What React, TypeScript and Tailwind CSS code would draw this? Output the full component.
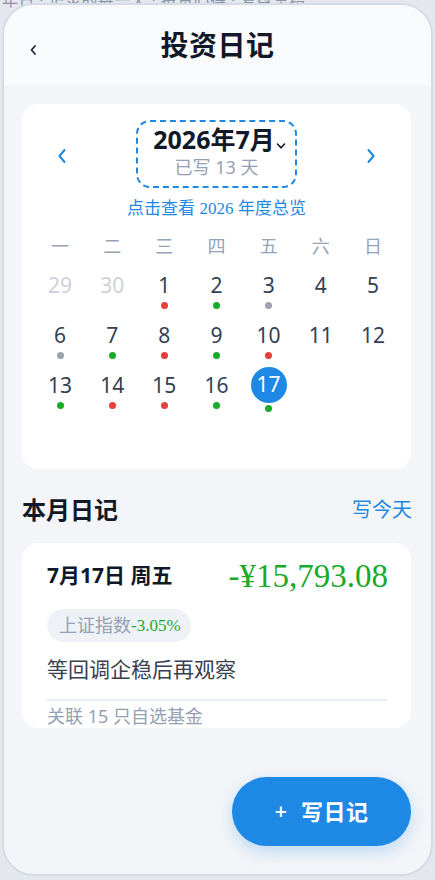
import React from "react";

const sans = { fontFamily: '"Noto Sans", "Noto Sans CJK SC", sans-serif' };
const serif = { fontFamily: '"Liberation Serif", "Noto Sans CJK SC", serif' };

type Day = { n: number; muted?: boolean; dot?: "r" | "g" | "s"; sel?: boolean } | null;

const rows: Day[][] = [
  [
    { n: 29, muted: true },
    { n: 30, muted: true },
    { n: 1, dot: "r" },
    { n: 2, dot: "g" },
    { n: 3, dot: "s" },
    { n: 4 },
    { n: 5 },
  ],
  [
    { n: 6, dot: "s" },
    { n: 7, dot: "g" },
    { n: 8, dot: "r" },
    { n: 9, dot: "g" },
    { n: 10, dot: "r" },
    { n: 11 },
    { n: 12 },
  ],
  [
    { n: 13, dot: "g" },
    { n: 14, dot: "r" },
    { n: 15, dot: "r" },
    { n: 16, dot: "g" },
    { n: 17, dot: "g", sel: true },
    null,
    null,
  ],
];

function Dot({ c, sel }: { c?: "r" | "g" | "s"; sel?: boolean }) {
  if (!c) return <div className="h-[6px] w-[6px] mt-[3px]" />;
  const cls =
    c === "r" ? "bg-[#e5403a]" : c === "g" ? "bg-[#1aaa2a]" : "bg-[#9ca3af]";
  return <div className={`h-[7px] w-[7px] rounded-full ${cls} ${sel ? "mt-[6px]" : "mt-[3px]"}`} />;
}

export default function App() {
  return (
    <div className="relative w-[435px] h-[880px] overflow-hidden bg-[#e4e8ee]" style={sans}>
      <div className="absolute left-[2px] top-[-12px] text-[16px] text-[#8a94a6] whitespace-nowrap tracking-wide">
        年日 · 记录的每一天 · 投资心得 · 复盘总结
      </div>
      <div className="relative mt-[3px] ml-[2px] w-[431px] h-[873px] rounded-[32px] border-2 border-[#d6dce6] bg-[#f3f5f8] overflow-hidden flex flex-col">
        {/* header */}
        <div className="relative h-[80px] bg-[#f9fafb] flex items-center justify-center shrink-0">
          <svg className="absolute left-[25px] top-[39px]" width="9" height="12" viewBox="0 0 9 12">
            <path d="M6 2 L2.5 6 L6 10" fill="none" stroke="#1f2937" strokeWidth="1.8" strokeLinecap="round" strokeLinejoin="round" />
          </svg>
          <div className="text-[28px] leading-[36px] font-bold text-[#111827] tracking-[0.5px] -mt-[1px]">投资日记</div>
        </div>

        <div className="pl-[18px] pr-[20px] pt-[19px] flex flex-col">
          {/* calendar card */}
          <div className="bg-white rounded-[16px] pt-[16px] pb-[59px] px-[12px]">
            <div className="relative flex justify-center">
              <svg className="absolute left-[23px] top-[28px]" width="10" height="16" viewBox="0 0 10 16">
                <path d="M7.5 2 L2.5 8 L7.5 14" fill="none" stroke="#1e88e5" strokeWidth="2" strokeLinecap="round" strokeLinejoin="round" />
              </svg>
              <svg className="absolute right-[23px] top-[28px]" width="10" height="16" viewBox="0 0 10 16">
                <path d="M2.5 2 L7.5 8 L2.5 14" fill="none" stroke="#1e88e5" strokeWidth="2" strokeLinecap="round" strokeLinejoin="round" />
              </svg>
              <div className="w-[161px] h-[68px] border-2 border-dashed border-[#1e88e5] rounded-[14px] flex flex-col items-center">
                <div className="flex items-end ml-[6px]">
                  <span className="text-[25px] font-bold text-[#111827] leading-[34px]">2026年7月</span>
                  <svg className="mb-[6px] ml-[1px]" width="10" height="8" viewBox="0 0 10 8">
                    <path d="M1.5 2 L5 5.8 L8.5 2" fill="none" stroke="#111827" strokeWidth="1.6" strokeLinecap="round" strokeLinejoin="round" />
                  </svg>
                </div>
                <div className="text-[18px] text-[#94a0b4] leading-[24px] -mt-[1px]">已写 13 天</div>
              </div>
            </div>
            <div className="mt-[9px] text-center text-[17px] leading-[22px] text-[#1e88e5]">
              点击查看 <span style={serif} className="text-[17px]">2026</span> 年度总览
            </div>
            <div className="mt-[13px] grid grid-cols-7 text-center text-[18px] leading-[26px] text-[#94a3b8]">
              {["一", "二", "三", "四", "五", "六", "日"].map((d) => (
                <div key={d}>{d}</div>
              ))}
            </div>
            <div className="mt-[1px] flex flex-col">
              {rows.map((r, i) => (
                <div key={i} className="grid grid-cols-7 h-[50px]">
                  {r.map((d, j) => (
                    <div key={j} className="flex flex-col items-center pt-[11px]">
                      {d &&
                        (d.sel ? (
                          <div className="w-[36px] h-[36px] -my-[4px] rounded-full bg-[#1e88e5] text-white flex items-center justify-center text-[21px]">
                            {d.n}
                          </div>
                        ) : (
                          <div className={`h-[28px] leading-[28px] text-[21px] ${d.muted ? "text-[#cdd2da]" : "text-[#334155]"}`}>
                            {d.n}
                          </div>
                        ))}
                      {d && <Dot c={d.dot} sel={d.sel} />}
                    </div>
                  ))}
                </div>
              ))}
            </div>
          </div>

          {/* month diary header */}
          <div className="mt-[25px] flex items-center justify-between">
            <div className="text-[24px] leading-[32px] font-bold text-[#111827]">本月日记</div>
            <div className="text-[20px] leading-[32px] text-[#1e88e5] -mr-[1px]">写今天</div>
          </div>

          {/* diary card */}
          <div className="mt-[17px] h-[185px] overflow-hidden bg-white rounded-[16px] pl-[25px] pr-[24px] pt-[15px]">
            <div className="flex items-center justify-between h-[36px]">
              <div className="text-[21px] font-bold text-[#111827]">7月17日 周五</div>
              <div className="text-[33px] leading-[36px] text-[#1aaa2a] -mr-[1px]" style={serif}>
                -¥15,793.08
              </div>
            </div>
            <div className="mt-[15px] inline-flex items-center h-[33px] rounded-full bg-[#eef2f7] pl-[12px] pr-[10px] text-[18px] text-[#94a0b4]">
              上证指数<span className="text-[#1aaa2a] text-[17px]" style={serif}>-3.05%</span>
            </div>
            <div className="mt-[14px] text-[21px] leading-[26px] text-[#374151]">等回调企稳后再观察</div>
            <div className="mt-[17px] h-[2px] bg-[#e8edf3]" />
            <div className="mt-[4px] text-[18px] leading-[22px] text-[#94a0b4]">关联 15 只自选基金</div>
          </div>
        </div>

        {/* FAB */}
        <div className="absolute right-[20px] bottom-[28px] w-[179px] h-[69px] rounded-full bg-[#1e88e5] flex items-center justify-center text-white shadow-[0_6px_16px_rgba(30,136,229,0.25)]">
          <span className="text-[22px] font-medium mr-[14px] -mt-[2px]">+</span>
          <span className="text-[22px] font-bold tracking-[0.5px]">写日记</span>
        </div>
      </div>
    </div>
  );
}
